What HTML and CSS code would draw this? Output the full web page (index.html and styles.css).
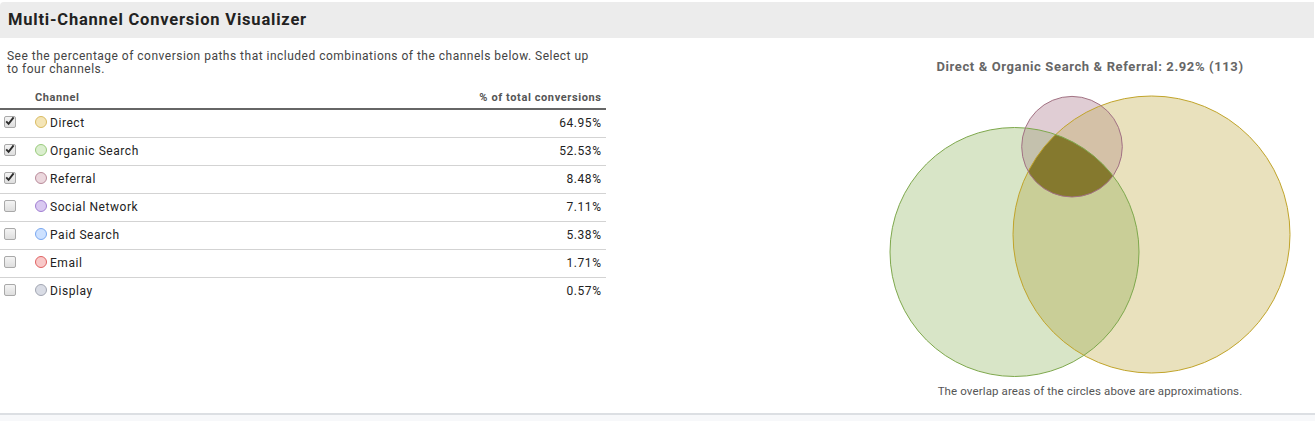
FILE: index.html
```html
<!DOCTYPE html>
<html>
<head>
<meta charset="utf-8">
<link rel="stylesheet" href="styles.css">
</head>
<body>
<div class="page">
  <header class="titlebar"><h1 class="title">Multi-Channel Conversion Visualizer</h1></header>
  <main class="main">
    <section class="left">
      <p class="desc">See the percentage of conversion paths that included combinations of the channels below. Select up to four channels.</p>
      <table class="channels">
        <thead>
          <tr><th class="c-check"></th><th class="c-name">Channel</th><th class="c-val">% of total conversions</th></tr>
        </thead>
        <tbody>
          <tr><td class="c-check"><span class="cb on"><svg viewBox="0 0 12 12" width="12" height="12"><path d="M2.2 6.3 L4.6 8.8 L9.6 2.4" fill="none" stroke="#2b2b2b" stroke-width="1.9"/></svg></span></td><td class="c-name"><span class="dot direct"></span>Direct</td><td class="c-val">64.95%</td></tr>
          <tr><td class="c-check"><span class="cb on"><svg viewBox="0 0 12 12" width="12" height="12"><path d="M2.2 6.3 L4.6 8.8 L9.6 2.4" fill="none" stroke="#2b2b2b" stroke-width="1.9"/></svg></span></td><td class="c-name"><span class="dot organic"></span>Organic Search</td><td class="c-val">52.53%</td></tr>
          <tr><td class="c-check"><span class="cb on"><svg viewBox="0 0 12 12" width="12" height="12"><path d="M2.2 6.3 L4.6 8.8 L9.6 2.4" fill="none" stroke="#2b2b2b" stroke-width="1.9"/></svg></span></td><td class="c-name"><span class="dot referral"></span>Referral</td><td class="c-val">8.48%</td></tr>
          <tr><td class="c-check"><span class="cb"></span></td><td class="c-name"><span class="dot social"></span>Social Network</td><td class="c-val">7.11%</td></tr>
          <tr><td class="c-check"><span class="cb"></span></td><td class="c-name"><span class="dot paid"></span>Paid Search</td><td class="c-val">5.38%</td></tr>
          <tr><td class="c-check"><span class="cb"></span></td><td class="c-name"><span class="dot email"></span>Email</td><td class="c-val">1.71%</td></tr>
          <tr><td class="c-check"><span class="cb"></span></td><td class="c-name"><span class="dot display"></span>Display</td><td class="c-val">0.57%</td></tr>
        </tbody>
      </table>
    </section>
    <section class="right">
      <div class="venn-title">Direct &amp; Organic Search &amp; Referral: 2.92% (113)</div>
      <svg class="venn" width="440" height="305" viewBox="0 0 440 305">
        <defs>
          <clipPath id="cy"><circle cx="281.5" cy="158.5" r="138.5"/></clipPath>
          <clipPath id="cg"><circle cx="144.5" cy="176" r="124.5"/></clipPath>
        </defs>
        <circle cx="281.5" cy="158.5" r="138.5" fill="#e9e1bd"/>
        <circle cx="144.5" cy="176" r="124.5" fill="#d8e5c7"/>
        <g clip-path="url(#cy)"><circle cx="144.5" cy="176" r="124.5" fill="#c9ce97"/></g>
        <circle cx="202" cy="70.7" r="50.3" fill="#e0cdd4"/>
        <g clip-path="url(#cg)"><circle cx="202" cy="70.7" r="50.3" fill="#c4c1ad"/></g>
        <g clip-path="url(#cy)"><circle cx="202" cy="70.7" r="50.3" fill="#d4c1a7"/></g>
        <g clip-path="url(#cg)"><g clip-path="url(#cy)"><circle cx="202" cy="70.7" r="50.3" fill="#85792e"/></g></g>
        <circle cx="281.5" cy="158.5" r="138.5" fill="none" stroke="#c1a42a" stroke-width="1"/>
        <circle cx="144.5" cy="176" r="124.5" fill="none" stroke="#7ea84c" stroke-width="1"/>
        <circle cx="202" cy="70.7" r="50.3" fill="none" stroke="#a27283" stroke-width="1"/>
      </svg>
      <div class="venn-note">The overlap areas of the circles above are approximations.</div>
    </section>
  </main>
  <footer class="foot"></footer>
</div>
</body>
</html>
```
FILE: styles.css
```css
html, body {
  margin: 0;
  padding: 0;
  background: #ffffff;
}
body {
  font-family: Roboto, "Liberation Sans", Arial, sans-serif;
  color: #222;
}
.page {
  padding-top: 2px;
  height: 419px;
  display: flex;
  flex-direction: column;
}
.titlebar {
  height: 36px;
  background: #ececec;
  border-radius: 4px 0 0 0;
  margin-right: 1px;
  display: flex;
  align-items: center;
  padding-left: 8px;
}
.title {
  margin: 0;
  font-size: 16.5px;
  letter-spacing: 0.8px;
  font-weight: 700;
  color: #222;
  line-height: 20px;
}
.main {
  height: 375px;
  display: flex;
  justify-content: space-between;
  border-bottom: 2px solid #dcdfe3;
}
.left {
  width: 606px;
  padding-top: 12px;
}
.desc {
  margin: 0;
  padding: 0 8px 0 7px;
  font-size: 12px;
  letter-spacing: 0.49px;
  line-height: 13px;
  color: #444;
}
.channels {
  margin-top: 8px;
  width: 606px;
  border-collapse: collapse;
  font-size: 12px;
  letter-spacing: 0.55px;
}
.channels th {
  font-size: 11px;
  letter-spacing: 0.6px;
  font-weight: 700;
  color: #555;
  height: 21px;
  padding: 0 0 3px;
  vertical-align: bottom;
  border-bottom: 2px solid #666;
  line-height: 14px;
}
.channels td {
  height: 25px;
  padding: 0 0 2px;
  line-height: 16px;
  border-bottom: 1px solid #d3d3d3;
  vertical-align: middle;
  color: #222;
}
.channels tbody tr:last-child td {
  border-bottom: none;
}
.channels th.c-check, .channels td.c-check {
  width: 31px;
  padding-left: 4px;
}
.channels th.c-name, .channels td.c-name {
  text-align: left;
}
.channels th.c-val, .channels td.c-val {
  text-align: right;
  padding-right: 4.5px;
}
.cb {
  display: block;
  width: 10px;
  height: 10px;
  border: 1px solid #a9a9a9;
  border-radius: 2px;
  background: linear-gradient(#f4f4f4, #dedede);
  position: relative;
  top: -1px;
}
.cb svg {
  position: absolute;
  left: -1px;
  top: -2px;
}
.dot {
  display: inline-block;
  width: 10px;
  height: 10px;
  border-radius: 50%;
  border: 1px solid #999;
  vertical-align: -1px;
  margin-right: 3px;
}
.dot.direct { background: #f4e5b7; border-color: #d9bb62; }
.dot.organic { background: #dbeecf; border-color: #9acb7d; }
.dot.referral { background: #ebd7dd; border-color: #b98b9a; }
.dot.social { background: #d9c9f1; border-color: #a17fd2; }
.dot.paid { background: #cde1ff; border-color: #79a8f1; }
.dot.email { background: #f8c9c9; border-color: #e06262; }
.dot.display { background: #d9dce5; border-color: #a2a6b2; }
.right {
  width: 440px;
  margin-right: 5px;
  padding-top: 20px;
  display: flex;
  flex-direction: column;
  align-items: center;
}
.venn-title {
  font-size: 13px;
  letter-spacing: 0.62px;
  font-weight: 700;
  color: #666;
  line-height: 18px;
}
.venn {
  display: block;
}
.venn-note {
  margin-top: 2px;
  font-size: 11.5px;
  letter-spacing: 0.12px;
  line-height: 16px;
  color: #555;
}
.foot {
  flex: 1;
  background: #f7f8fa;
}
```
